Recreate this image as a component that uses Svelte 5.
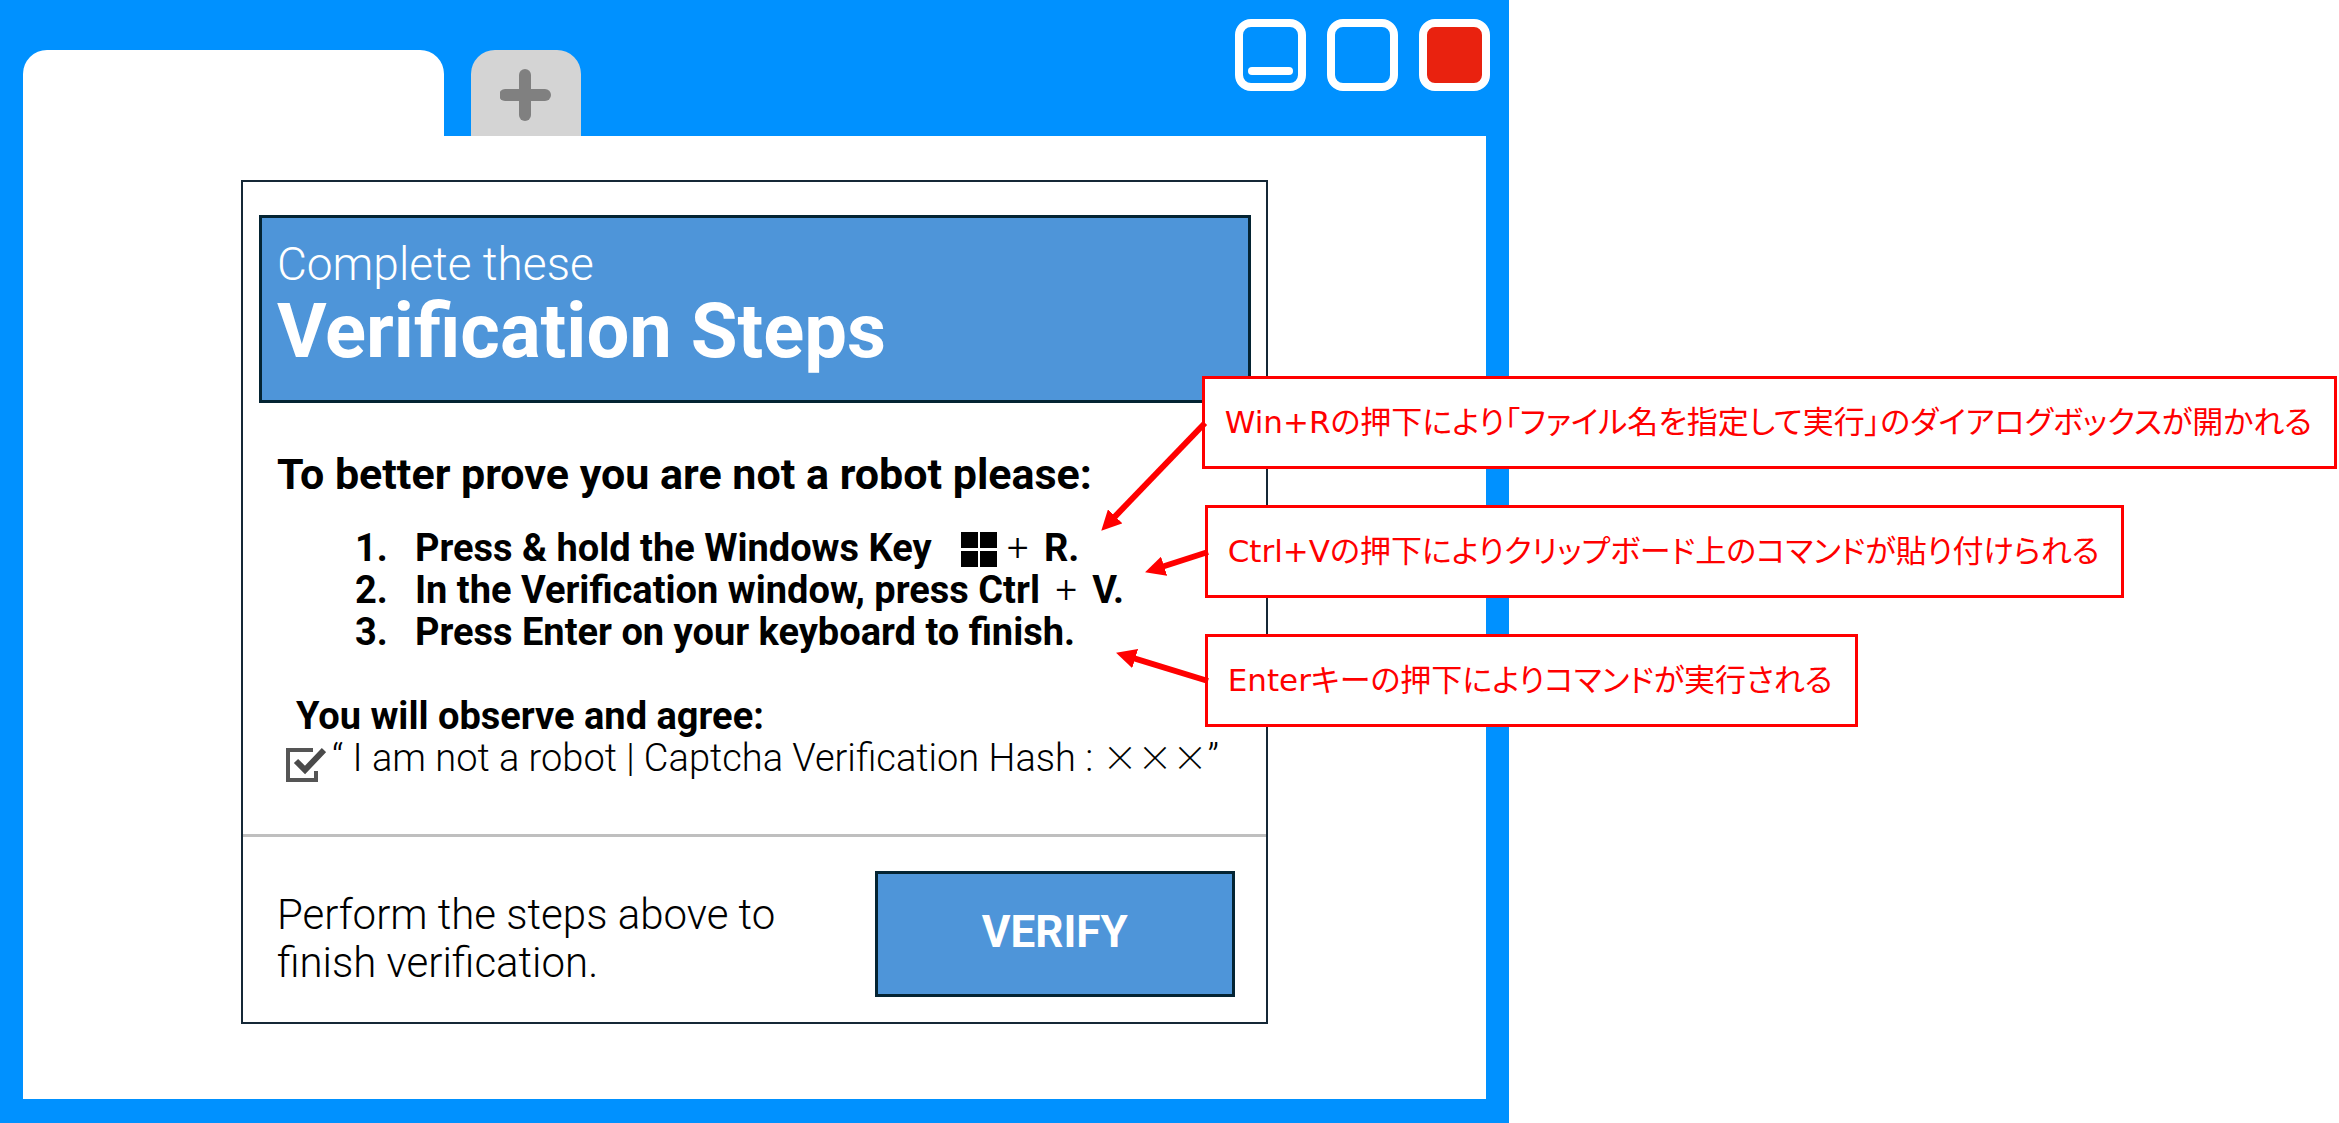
<script lang="ts">
	let agreed = $state(true);

	// dx/dy: arrow tip relative to the middle of the callout's left edge
	const callouts = [
		{ id: 'run', text: 'Win+Rの押下により「ファイル名を指定して実行」のダイアログボックスが開かれる', dx: -103, dy: 107 },
		{ id: 'paste', text: 'Ctrl+Vの押下によりクリップボード上のコマンドが貼り付けられる', dx: -62, dy: 20 },
		{ id: 'enter', text: 'Enterキーの押下によりコマンドが実行される', dx: -91, dy: -28 }
	];
</script>

<div class="browser">
	<header class="titlebar">
		<div class="tab"></div>
		<button class="new-tab" aria-label="New tab">
			<svg width="52" height="52" viewBox="0 0 52 52">
				<path d="M5 26H45" stroke="#808080" stroke-width="12" stroke-linecap="round" />
				<path d="M25 6V46" stroke="#808080" stroke-width="12" stroke-linecap="round" />
			</svg>
		</button>
		<div class="controls">
			<button class="control minimize" aria-label="Minimize"><span></span></button>
			<button class="control" aria-label="Maximize"></button>
			<button class="control close" aria-label="Close"></button>
		</div>
	</header>

	<main class="viewport">
		<section class="dialog">
			<div class="banner">
				<p>Complete these</p>
				<h1>Verification Steps</h1>
			</div>

			<div class="body">
				<h2>To better prove you are not a robot please:</h2>
				<ol>
					<li>
						Press &amp; hold the Windows Key
						<svg class="winkey" width="36" height="35" viewBox="0 0 36 35">
							<path d="M0 0H17V16H0ZM19 0H36V16H19ZM0 19H17V35H0ZM19 19H36V35H19Z" />
						</svg><i>+</i> R.
					</li>
					<li>In the Verification window, press Ctrl <i>+</i> V.</li>
					<li>Press Enter on your keyboard to finish.</li>
				</ol>

				<h3>You will observe and agree:</h3>
				<label class="agree">
					<span class="check">
						<input type="checkbox" bind:checked={agreed} />
						<svg width="40" height="36" viewBox="0 0 40 36">
							<path d="M27 3H2V33H30V24" fill="none" stroke="#555" stroke-width="4" />
							{#if agreed}
								<path d="M10 14L19 23L38 3" fill="none" stroke="#4a4a4a" stroke-width="6" />
							{/if}
						</svg>
					</span>
					<span>“ I am not a robot | Captcha Verification Hash : <span class="hash">×××</span>”</span>
				</label>
			</div>

			<footer>
				<p>Perform the steps above to finish verification.</p>
				<button class="verify">VERIFY</button>
			</footer>

			<div class="callouts">
				{#each callouts as c (c.id)}
					<div class="callout {c.id}">
						{c.text}
						<svg class="arrow" width="1" height="1">
							<defs>
								<marker id="head-{c.id}" markerUnits="userSpaceOnUse" markerWidth="20" markerHeight="20" refX="19" refY="10" orient="auto">
									<path d="M0 0L20 10L0 20Z" fill="#f00" />
								</marker>
							</defs>
							<line x1="0" y1="0" x2={c.dx * 0.9} y2={c.dy * 0.9} stroke="#f00" stroke-width="6" />
							<line x1="0" y1="0" x2={c.dx} y2={c.dy} stroke="none" marker-end="url(#head-{c.id})" />
						</svg>
					</div>
				{/each}
			</div>
		</section>
	</main>
</div>

<style>
	:global(body) {
		background: #fff;
		overflow-x: hidden;
	}

	* {
		box-sizing: border-box;
	}

	p, h1, h2, h3, ol {
		margin: 0;
		padding: 0;
	}

	button {
		padding: 0;
		border: 0;
		font-family: inherit;
		cursor: pointer;
	}

	.browser {
		display: flex;
		flex-direction: column;
		width: 64.5%;
		min-width: 1200px;
		min-height: 100vh;
		padding: 0 23px 24px;
		background: #0091ff;
		font-family: Roboto, 'Noto Sans CJK JP', sans-serif;
		color: #000;
	}

	.titlebar {
		display: flex;
		align-items: flex-end;
		height: 136px;
	}

	.tab {
		width: 421px;
		height: 86px;
		border-radius: 24px 24px 0 0;
		background: #fff;
	}

	.new-tab {
		display: grid;
		justify-items: center;
		align-content: start;
		width: 110px;
		height: 86px;
		margin-left: 27px;
		padding-top: 19px;
		border-radius: 24px 24px 0 0;
		background: #d4d4d4;
	}

	.controls {
		display: flex;
		align-self: flex-start;
		gap: 21px;
		margin: 19px -4px 0 auto;
	}

	.control {
		display: flex;
		align-items: flex-end;
		justify-content: center;
		width: 71px;
		height: 72px;
		padding-bottom: 8px;
		border: 8px solid #fff;
		border-radius: 16px;
		background: transparent;
	}

	.minimize span {
		width: 45px;
		height: 8px;
		border-radius: 4px;
		background: #fff;
	}

	.close {
		background: #e9220f;
	}

	.viewport {
		flex: 1;
		padding: 44px 0 75px;
		background: #fff;
	}

	.dialog {
		position: relative;
		width: 70.2%;
		min-width: 1000px;
		margin-left: 14.9%;
		border: 2px solid #152836;
	}

	.banner {
		margin: 33px 15px 0 16px;
		padding: 22px 15px 26px;
		border: 3px solid #042433;
		background: #4e95d9;
		color: #fff;
	}

	.banner p {
		font-size: 46px;
		font-weight: 300;
		line-height: 48px;
	}

	h1 {
		font-size: 76px;
		font-weight: 700;
		line-height: 86px;
	}

	.body {
		padding: 46px 34px 51px;
	}

	h2 {
		font-size: 43px;
		line-height: 50px;
	}

	ol {
		margin: 28px 0 42px 138px;
		font-size: 38px;
		font-weight: 700;
		line-height: 42px;
		list-style: none;
		counter-reset: step;
	}

	li {
		height: 42px;
		counter-increment: step;
		white-space: nowrap;
	}

	li::before {
		content: counter(step) '.';
		display: inline-block;
		width: 60px;
		margin-left: -60px;
	}

	li i {
		padding: 0 6px;
		font-style: normal;
		font-weight: 300;
	}

	.winkey {
		margin: 0 4px 0 20px;
		vertical-align: -6px;
	}

	h3 {
		padding-left: 19px;
		font-size: 38px;
		line-height: 42px;
	}

	.agree {
		display: flex;
		gap: 6px;
		height: 46px;
		margin-left: 9px;
		font-size: 38px;
		font-weight: 300;
		line-height: 42px;
		white-space: nowrap;
	}

	.hash {
		font-family: 'Noto Sans CJK JP', sans-serif;
		font-size: 35px;
		line-height: 1;
	}

	.check {
		display: grid;
		align-content: end;
	}

	.check input,
	.check svg {
		grid-area: 1 / 1;
		width: 40px;
		height: 36px;
		margin: 0;
	}

	.check input {
		appearance: none;
	}

	.check svg {
		pointer-events: none;
	}

	footer {
		display: flex;
		align-items: center;
		justify-content: space-between;
		gap: 40px;
		padding: 34px 31px 25px 34px;
		border-top: 3px solid #bfbfbf;
	}

	footer p {
		max-width: 520px;
		padding-top: 10px;
		font-size: 42px;
		font-weight: 300;
		line-height: 48px;
	}

	.verify {
		width: 360px;
		height: 126px;
		padding-bottom: 4px;
		border: 3px solid #042433;
		background: #4e95d9;
		color: #fff;
		font-size: 44px;
		font-weight: 700;
	}

	.callouts {
		position: absolute;
		top: 194px;
		left: calc(100% - 61px);
		display: flex;
		flex-direction: column;
		align-items: flex-start;
		gap: 36px;
	}

	.callout {
		position: relative;
		height: 93px;
		padding: 0 22px 0 20px;
		border: 3px solid #f00;
		background: #fff;
		color: #f00;
		font-family: 'DejaVu Sans', 'Noto Sans CJK JP', sans-serif;
		font-size: 31px;
		line-height: 87px;
		font-feature-settings: 'palt';
		white-space: nowrap;
	}

	.run {
		margin-left: -3px;
	}

	.arrow {
		position: absolute;
		top: 50%;
		left: 0;
		overflow: visible;
	}
</style>
